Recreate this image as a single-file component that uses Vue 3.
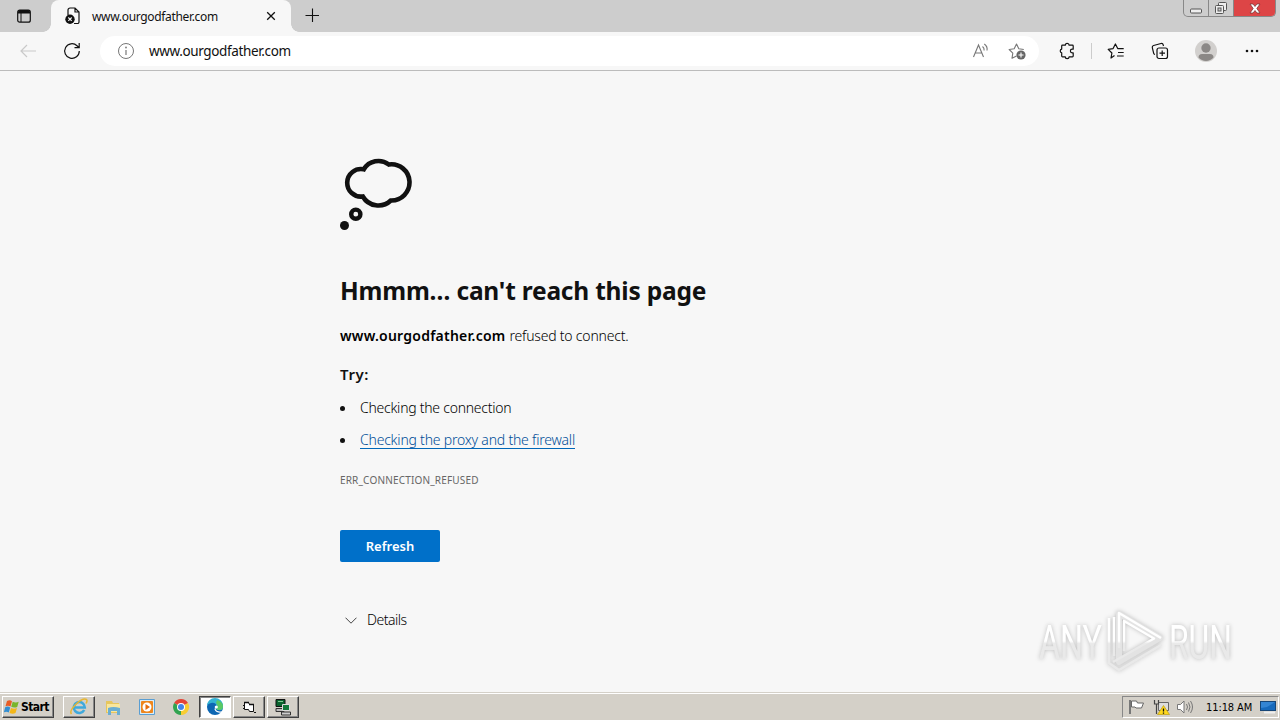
<template>
  <div class="screen">
    <header class="tab-strip">
      <button class="tab-actions" aria-label="Tab actions">
        <svg width="16" height="16" viewBox="0 0 16 16">
          <rect x="1.7" y="2.2" width="12.6" height="12" rx="2" fill="none" stroke="#111" stroke-width="1.2" />
          <path d="M2 4a2 2 0 0 1 2-2h8a2 2 0 0 1 2 2v1.500H2z" fill="#111" />
          <path d="M5 5v9" stroke="#111" />
        </svg>
      </button>
      <div class="tab">
        <svg width="16" height="18" viewBox="0 0 16 18">
          <path d="M3 8V3a2 2 0 0 1 2-2h5l4 4v10a1.500 1.500 0 0 1-1.500 1.500H9M10 1v4h4" fill="none" stroke="#111" stroke-width="1.200" />
          <circle cx="5" cy="12.200" r="4.700" fill="#111" />
          <path d="M3.300 10.500l3.400 3.400m0-3.400l-3.400 3.400" stroke="#f7f7f7" stroke-width="1.100" />
        </svg>
        <span class="tab-title">{{ host }}</span>
        <svg class="tab-close" width="10" height="10" viewBox="0 0 10 10">
          <path d="M1.200 1.200l7.600 7.600m0-7.600L1.200 8.800" stroke="#111" stroke-width="1.300" />
        </svg>
      </div>
      <svg class="new-tab" width="14" height="14" viewBox="0 0 14 14">
        <path d="M7 0v14M0 7h14" transform="translate(.5 .5)" stroke="#111" stroke-width="1.100" />
      </svg>
      <div class="window-controls">
        <span class="control minimize">
          <svg width="12" height="6" viewBox="0 0 12 6"><rect x=".5" y="1" width="11" height="4" rx="1" fill="#eee" stroke="#555" /></svg>
        </span>
        <span class="control restore">
          <svg width="14" height="13" viewBox="0 0 14 13" fill="#eee" stroke="#555">
            <rect x="4.500" y=".5" width="8" height="8" rx="1" />
            <rect x="1.500" y="3.500" width="8" height="8" rx="1" />
            <rect x="4" y="6" width="3" height="3" fill="#ccc" />
          </svg>
        </span>
        <span class="control close">
          <svg width="12" height="11" viewBox="0 0 12 11">
            <path d="M1 1h3l2 2.500L8 1h3L7.800 5.500 11 10H8L6 7.500 4 10H1l3.200-4.500z" fill="#fff" stroke="#6d3030" stroke-width=".7" />
          </svg>
        </span>
      </div>
    </header>

    <nav class="toolbar">
      <svg class="back" width="18" height="16" viewBox="0 0 18 16" fill="none" stroke="#c9c9c9" stroke-width="1.200">
        <path d="M17 8H2M8 2L2 8l6 6" />
      </svg>
      <svg class="reload" width="18" height="18" viewBox="0 0 18 18" fill="none" stroke="#111" stroke-width="1.200">
        <path d="M16.300 9A7.300 7.300 0 1 1 14 3.700L16 5.500M16.200 1v4.700h-4.700" />
      </svg>
      <div class="address">
        <svg class="info" width="18" height="18" viewBox="0 0 18 18">
          <circle cx="9" cy="9" r="7.500" fill="none" stroke="#777" />
          <path d="M9 8v5" stroke="#777" stroke-width="1.200" />
          <circle cx="9" cy="5.500" r=".9" fill="#777" />
        </svg>
        <span class="url">{{ host }}</span>
        <svg class="read-aloud" width="18" height="18" viewBox="0 0 18 18" fill="none" stroke="#777" stroke-width="1.100">
          <path d="M1.500 15L6.500 3l5 12M3.300 11h6.400M10.500 4.500q2 1.600 1.600 4M12.300 2q3.500 2.500 2.700 6.500" />
        </svg>
        <svg class="add-favorite" width="19" height="18" viewBox="0 0 19 18">
          <path d="M8.500 14L4 16.300l.8-5.200L1.200 7.500l5-.8L8.500 2l2.300 4.700 5 .8" fill="none" stroke="#777" stroke-width="1.100" stroke-linejoin="round" />
          <circle cx="13" cy="13" r="4.600" fill="#666" />
          <path d="M13 10.500v5M10.500 13h5" stroke="#fff" stroke-width="1.100" />
        </svg>
      </div>
      <svg class="extensions" width="18" height="18" viewBox="0 0 18 18" fill="none" stroke="#111" stroke-width="1.200" stroke-linejoin="round">
        <path d="M4.500 3.200h2.800a1.900 1.900 0 0 1 3.800 0h3.300q.8 0 .8.800v3.200h-1a1.800 1.800 0 0 0 0 3.600h1V14q0 .8-.8.800h-3.300a1.900 1.900 0 0 1-3.800 0H4.500q-.8 0-.8-.8v-3.200a1.900 1.900 0 0 1 0-3.700V4q0-.8.800-.8z" />
      </svg>
      <span class="divider"></span>
      <svg class="favorites" width="18" height="18" viewBox="0 0 18 18" fill="none" stroke="#111" stroke-width="1.200" stroke-linejoin="round">
        <path d="M7.500 13.600L4 16l.9-5L1.200 7.300l4.900-.7L8.400 2l2.300 4.600h6M11 10.500h5.700M10 14h6.700" />
      </svg>
      <svg class="collections" width="18" height="18" viewBox="0 0 18 18" fill="none" stroke="#111" stroke-width="1.200">
        <rect x="6" y="6" width="10.500" height="10.500" rx="2" />
        <path d="M11.200 8.500v5.500M8.500 11.200H14M4 12.500Q3 12.300 2.700 11.300L1.300 5.600Q1 4 2.600 3.500l7.400-2q1.800-.4 2.200 1.300l.3 1.200" />
      </svg>
      <svg class="profile" width="22" height="22" viewBox="0 0 22 22">
        <circle cx="11" cy="11" r="11" fill="#d2d0ce" />
        <circle cx="11" cy="8" r="4.700" fill="#8b8886" />
        <path d="M3.500 17.500q0-3.500 3.500-3.500h8q3.500 0 3.500 3.500a10 10 0 0 1-15 0z" fill="#8b8886" />
      </svg>
      <svg class="more" width="14" height="4" viewBox="0 0 14 4" fill="#111">
        <circle cx="2" cy="2" r="1.300" /><circle cx="7" cy="2" r="1.300" /><circle cx="12" cy="2" r="1.300" />
      </svg>
    </nav>

    <main class="page">
      <svg class="thought" width="74" height="74" viewBox="0 0 74 74" fill="none" stroke="#111">
        <path d="M23.800 11.300A17 17 0 0 1 48.800 6.500A18.100 18.100 0 1 1 50.800 42.500A18 18 0 0 1 22.800 38.500A13.800 13.800 0 1 1 23.800 11.300Z" stroke-width="4.600" />
        <circle cx="15.800" cy="56.200" r="4.600" stroke-width="4.400" />
        <circle cx="4.500" cy="67.500" r="4.500" fill="#111" stroke="none" />
      </svg>
      <h1><span>Hmmm… can't reach this page</span></h1>
      <p class="summary"><strong>{{ host }}</strong><span class="refused">refused to connect.</span></p>
      <h2>Try:</h2>
      <ul class="suggestions">
        <li><span class="suggestion">Checking the connection</span></li>
        <li><a href="#" class="suggestion-link">Checking the proxy and the firewall</a></li>
      </ul>
      <p class="error-code">ERR_CONNECTION_REFUSED</p>
      <button class="refresh-btn"><span>Refresh</span></button>
      <button class="details-btn">
        <svg width="12" height="7" viewBox="0 0 12 7"><path d="M.5.7L6 6.200 11.500.7" fill="none" stroke="#444" /></svg>
        <span>Details</span>
      </button>
    </main>

    <svg class="watermark" width="204" height="68" viewBox="0 0 204 68">
      <defs>
        <linearGradient id="fade" gradientUnits="userSpaceOnUse" x1="0" y1="0" x2="0" y2="66">
          <stop offset=".5" stop-color="#fff" />
          <stop offset=".54" stop-color="#e9e9e9" />
        </linearGradient>
      </defs>
      <text x="1" y="51" textLength="63" lengthAdjust="spacingAndGlyphs" fill="url(#fade)">ANY</text>
      <g fill="none" stroke-linejoin="round" stroke="url(#fade)" stroke-width="2.500">
        <path d="M81 6L122 30L81 54Z" stroke="#e3e3e3" stroke-width="6" />
        <path d="M81 40V5L123 30M86 43V13L116 30.500L75 54M71 10V55L81 62L123 37M76 9V48" />
      </g>
      <text x="131" y="51" textLength="63" lengthAdjust="spacingAndGlyphs" fill="url(#fade)">RUN</text>
    </svg>

    <footer class="taskbar">
      <button class="start">
        <svg width="16" height="16" viewBox="0 0 16 16">
          <path d="M3 2q3-1.500 5 .2L6.500 7.500Q4 6 1.500 7.300z" fill="#e85d26" />
          <path d="M8.700 2.700q3 1.500 6 .1L13.200 8q-3 1.300-6-.2z" fill="#79b52a" />
          <path d="M1.200 8.300q2.500-1.400 5 .1L4.800 13.500Q2.500 12-.1 13.200z" fill="#328ed2" />
          <path d="M7 8.900q3 1.500 6 .1l-1.500 5.100q-3 1.300-6-.2z" fill="#f4b719" />
        </svg>
        <span>Start</span>
      </button>
      <div class="task-buttons">
        <span class="task raised">
          <svg width="20" height="18" viewBox="0 0 20 18" fill="none">
            <path d="M15.200 12A5.500 5.500 0 1 1 15.800 9.500H6" stroke="#3fa9dc" stroke-width="2.600" />
            <path d="M2.500 16C-1 12 13-1 17.500 1.500q1.200 1-.5 4" stroke="#e7b632" stroke-width="1.500" />
          </svg>
        </span>
        <span class="task">
          <svg width="18" height="17" viewBox="0 0 18 17">
            <path d="M2 2h6l1 2h6v10H2z" fill="#e6c65d" /><path d="M3 5h13v8H3z" fill="#f8e69c" />
            <path d="M4 16V9q5-2 12 0v7h-3v-4H7v4z" fill="#6aaed2" />
          </svg>
        </span>
        <span class="task">
          <svg width="18" height="18" viewBox="0 0 18 18">
            <path d="M1.500 1.500h15v15h-15z" fill="#d9edf9" stroke="#5a9ed2" />
            <rect x="3" y="3" width="12" height="12" rx="1" fill="#ee861d" />
            <circle cx="9" cy="9" r="4.500" fill="#fff" /><path d="M7.500 6l4.500 3-4.500 3z" fill="#e46c0c" />
          </svg>
        </span>
        <span class="task">
          <svg width="18" height="18" viewBox="0 0 18 18">
            <path d="M9 9L2.100 5A8 8 0 0 1 16 5z" fill="#e44437" />
            <path d="M9 9L16 5A8 8 0 0 1 9 17z" fill="#f8cd32" />
            <path d="M9 9v8A8 8 0 0 1 2.100 5z" fill="#31a350" />
            <circle cx="9" cy="9" r="4" fill="#fff" /><circle cx="9" cy="9" r="3" fill="#4285e9" />
          </svg>
        </span>
        <span class="task pressed">
          <svg width="18" height="18" viewBox="0 0 18 18">
            <circle cx="9" cy="9" r="8" fill="#0d66b2" />
            <path d="M1 8A8 8 0 0 1 17 8q.5 5-5 4-3-1-1-3Q10 4 5 5 2 5.500 1 8z" fill="#34b3d4" />
            <path d="M11 2q6 1.500 6 6.500 0 4-5 3.500-3-1-1-3 1-2-1-4z" fill="#5ac966" />
            <path d="M9.500 8q-1 5 4 5.500 2 .2 3.500-.5l-.5 1.500q-6 1-8-3z" fill="#fff" /><circle cx="10.300" cy="9" r="1.600" fill="#fff" />
          </svg>
        </span>
        <span class="task raised">
          <svg width="16" height="16" viewBox="0 0 16 16">
            <path d="M3.500 3.500h4l1 2h4v7h-4l-1-2h-4z" fill="#fff" stroke="#111" />
            <path d="M3 3.500h5M8 5.500h5" stroke="#111" stroke-width="1.600" /><path d="M2 6.500h2M2 9.500h2M13 13.500h2" stroke="#111" />
          </svg>
        </span>
        <span class="task raised">
          <svg width="18" height="18" viewBox="0 0 18 18">
            <path d="M2 1.500h9v7H2z" fill="#09632e" stroke="#111" /><path d="M4 3.500h5" stroke="#7fc792" />
            <path d="M2 10.500h8v3H2z" fill="#bbb" stroke="#333" />
            <path d="M8.500 6.500h7v6h-7z" fill="#137a3b" stroke="#ddd" /><path d="M7.500 14h9v3h-9z" fill="#ccc" stroke="#333" />
          </svg>
        </span>
      </div>
      <div class="tray">
        <svg class="flag" width="18" height="16" viewBox="0 0 18 16">
          <path d="M2 1v14" stroke="#777" stroke-width="2" /><path d="M3.500 2h5l1 2h6l-2 5H8L7 8H3.500z" fill="#fff" stroke="#666" />
        </svg>
        <svg class="network" width="17" height="17" viewBox="0 0 17 17">
          <path d="M5.500 3.500h10v8h-10z" fill="#ddd" stroke="#666" /><path d="M1.500 1v4h4V1M3.500 5v10" fill="none" stroke="#444" stroke-width="1.200" />
          <path d="M10.500 6.500l6 9h-12z" fill="#ffd91c" stroke="#b69300" stroke-width=".6" /><path d="M10.500 9.500v3m0 1v1.200" stroke="#111" stroke-width="1.300" />
        </svg>
        <svg class="volume" width="18" height="16" viewBox="0 0 18 16" fill="none" stroke="#777">
          <path d="M1.500 5.500h3L8 2v12l-3.500-3.500h-3z" fill="#fff" /><path d="M10.500 5q2 3 0 6M12.500 3.500q3 4.500 0 9M14.500 2q4 6 0 12" />
        </svg>
        <span class="clock">11:18 AM</span>
        <svg class="desktop" width="16" height="14" viewBox="0 0 16 14">
          <rect x=".5" y="1.500" width="15" height="9" fill="#176abc" stroke="#174677" />
          <path d="M1 2h14L7 7 1 8z" fill="#3485d3" /><path d="M4 12.500h11" stroke="#eee" stroke-width="2" />
        </svg>
      </div>
    </footer>
  </div>
</template>

<script setup>
const host = 'www.ourgodfather.com';
</script>

<style>
body {
  margin: 0;
  overflow: hidden;
}
</style>

<style scoped>
* {
  box-sizing: border-box;
}

.screen {
  width: 1280px;
  height: 720px;
  display: flex;
  flex-direction: column;
  position: relative;
  overflow: hidden;
  background: #f7f7f7;
  color: #111;
  font-family: 'Noto Sans', 'Open Sans', sans-serif;
}

svg {
  display: block;
  flex: none;
}

button {
  border: 0;
  padding: 0;
  background: none;
  color: inherit;
  font-family: inherit;
}

span,
a,
strong {
  white-space: nowrap;
}

.tab-strip {
  display: flex;
  height: 32px;
  flex: none;
  background: #cdcdcd;
}

.tab-actions {
  width: 51px;
  padding: 0 0 0 16px;
}

.tab {
  width: 240px;
  display: flex;
  align-items: center;
  padding: 0 15px 0 14px;
  border-radius: 8px 8px 0 0;
  background: #f7f7f7;
  position: relative;
}

.tab::before,
.tab::after {
  content: '';
  position: absolute;
  bottom: 0;
  width: 8px;
  height: 8px;
}

.tab::before {
  left: -8px;
  background: radial-gradient(circle at 0 0, #cdcdcd 7.5px, #f7f7f7 8px);
}

.tab::after {
  right: -8px;
  background: radial-gradient(circle at 100% 0, #cdcdcd 7.5px, #f7f7f7 8px);
}

.tab-title {
  margin-left: 11px;
  font-size: 12px;
  letter-spacing: -0.33px;
}

.tab-close {
  margin-left: auto;
}

.new-tab {
  margin: 8px 0 0 14px;
}

.window-controls {
  width: 93px;
  height: 17px;
  margin: 0 4px 0 auto;
  display: flex;
  border: 1px solid #888;
  border-top: 0;
  border-radius: 0 0 5px 5px;
  overflow: hidden;
}

.control {
  width: 25px;
  display: flex;
  align-items: center;
  justify-content: center;
  border-right: 1px solid #888;
}

.minimize {
  padding-top: 5px;
}

.control.close {
  width: 41px;
  border: 0;
  background: #dd4546;
}

.toolbar {
  height: 39px;
  flex: none;
  display: flex;
  align-items: center;
  padding: 0 21px 0 19px;
  border-bottom: 1px solid #bcbcbc;
  background: #f7f7f7;
}

.reload {
  margin-left: 26px;
}

.address {
  width: 939px;
  height: 30px;
  margin-left: 19px;
  display: flex;
  align-items: center;
  padding: 0 12px 0 17px;
  background: #fff;
  border-radius: 15px;
}

.url {
  margin-left: 14px;
  font-size: 13.5px;
  letter-spacing: -0.36px;
}

.read-aloud {
  margin-left: auto;
}

.add-favorite {
  margin-left: 18px;
}

.extensions {
  margin-left: 19px;
}

.divider {
  width: 1px;
  height: 16px;
  margin-left: 15px;
  background: #ccc;
}

.favorites {
  margin-left: 15px;
}

.collections {
  margin-left: 26px;
}

.profile {
  margin-left: 26px;
}

.more {
  margin-left: auto;
}

.page {
  flex: 1;
  display: flex;
  flex-direction: column;
  align-items: flex-start;
  padding: 87px 0 0 340px;
}

h1 {
  height: 36px;
  margin: 41px 0 0;
  font-size: 24.5px;
  line-height: 36px;
  letter-spacing: -0.21px;
}

.summary {
  height: 20px;
  display: flex;
  margin: 17px 0 0;
  font-size: 14px;
  line-height: 20px;
}

.summary strong {
  font-weight: 600;
  letter-spacing: 0.23px;
  color: #000;
}

.refused {
  margin-left: 4px;
  font-weight: 300;
  letter-spacing: -0.2px;
  color: #000;
}

h2 {
  height: 20px;
  margin: 18px 0 1px;
  font-size: 15px;
  line-height: 20px;
  font-weight: 600;
  letter-spacing: 0.6px;
}

.suggestions {
  display: flex;
  flex-direction: column;
  gap: 12px;
  margin: 13px 0 0;
  padding: 0;
  list-style: none;
  font-size: 14px;
  line-height: 20px;
  letter-spacing: -0.25px;
}

.suggestions li {
  height: 20px;
  display: flex;
  align-items: center;
}

.suggestions li::before {
  content: '';
  width: 5px;
  height: 5px;
  margin-right: 15px;
  border-radius: 50%;
  background: #111;
}

.suggestion,
.suggestion-link {
  font-weight: 300;
  color: #000;
}

.suggestion-link {
  height: 18px;
  line-height: 18px;
  border-bottom: 1px solid #0067b8;
  letter-spacing: -0.21px;
  color: #004e98;
  text-decoration: none;
}

.error-code {
  height: 16px;
  margin: 22px 0 0;
  font-size: 10px;
  line-height: 16px;
  letter-spacing: 0.17px;
  color: #666;
}

.refresh-btn {
  width: 100px;
  height: 32px;
  margin-top: 42px;
  border-radius: 2px;
  background: #0070c9;
  color: #fff;
  font-size: 13px;
  font-weight: 600;
}

.details-btn {
  display: flex;
  align-items: center;
  gap: 10px;
  height: 20px;
  margin: 48px 0 0 5px;
  font-size: 14px;
  line-height: 20px;
  font-weight: 300;
  letter-spacing: -0.5px;
  color: #000;
}

/* floats over the lower right corner of the page */
.watermark {
  position: absolute;
  left: 1038px;
  top: 608px;
  font-family: Roboto, sans-serif;
  font-size: 49px;
  filter: drop-shadow(0 0 2px #bbb);
}

.taskbar {
  height: 27px;
  flex: none;
  display: flex;
  align-items: flex-start;
  padding: 2px 0 0 2px;
  border-top: 1px solid #fff;
  box-shadow: 0 -1px #d4d0c8;
  background: #d4d0c8;
  font-family: 'DejaVu Sans Condensed', 'DejaVu Sans', sans-serif;
}

.start,
.raised {
  border: 1px solid;
  border-color: #fff #404040 #404040 #fff;
  box-shadow: inset -1px -1px #888;
}

.start {
  width: 52px;
  height: 22px;
  display: flex;
  align-items: center;
  gap: 1px;
  padding-left: 1px;
  font-size: 12px;
  font-weight: 700;
  letter-spacing: -0.6px;
  color: #000;
}

.task-buttons {
  display: flex;
  gap: 2px;
  margin-left: 9px;
}

.task {
  width: 32px;
  height: 22px;
  display: flex;
  align-items: center;
  justify-content: center;
}

.pressed {
  border: 1px solid;
  border-color: #404040 #fff #fff #404040;
  box-shadow: inset 1px 1px #888;
  background: #fff;
}

.tray {
  width: 157px;
  height: 22px;
  margin-left: auto;
  margin-right: 1px;
  display: flex;
  align-items: center;
  padding-left: 5px;
  border: 1px solid;
  border-color: #888 #fff #fff #888;
}

.network {
  margin-left: 7px;
}

.volume {
  margin-left: 6px;
}

.clock {
  width: 48px;
  margin-left: 12px;
  font-size: 11px;
  letter-spacing: -0.1px;
  color: #000;
}

.desktop {
  margin-left: 6px;
}
</style>
